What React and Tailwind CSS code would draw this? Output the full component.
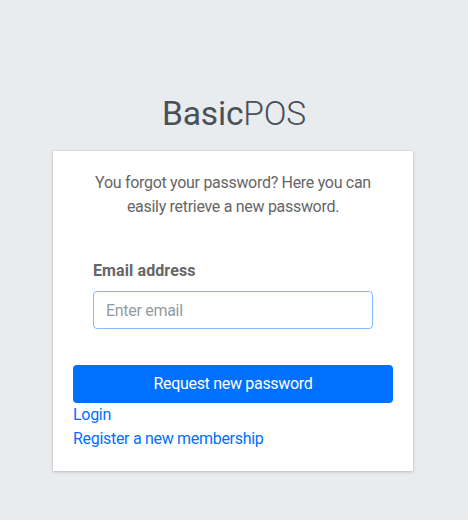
export default function App() {
  return (
    <div
      className="min-h-[520px] bg-[#e9ecef] flex flex-col items-center pt-[91px] tracking-[-0.3px]"
      style={{ fontFamily: 'Roboto, "Noto Sans", sans-serif' }}
    >
      <div className="text-[33.6px] leading-[46px] text-[#495057] font-light mb-[14px] tracking-[-0.2px]">
        <span className="font-normal">Basic</span>POS
      </div>

      <div className="w-[360px] mr-[2px] bg-white shadow-[0_0_1px_rgba(0,0,0,0.125),0_1px_3px_rgba(0,0,0,0.2)] p-5">
        <p className="text-center text-[#666] text-base leading-6 px-5 pb-5">
          You forgot your password? Here you can easily retrieve a new password.
        </p>

        <form onSubmit={(e) => e.preventDefault()}>
          <div className="px-5 pt-5 pb-4">
            <label className="block font-bold text-[#666] text-base leading-6 mb-2 tracking-[0.1px]">
              Email address
            </label>
            <input
              type="email"
              autoFocus
              placeholder="Enter email"
              className="w-full h-[38px] px-3 rounded border border-[#80bdff] text-base text-[#495057] placeholder:text-[#939ba2] outline-none"
            />
          </div>
          <div className="pt-5">
            <button
              type="submit"
              className="w-full h-[38px] rounded bg-[#0070ff] text-white text-base"
            >
              Request new password
            </button>
          </div>
        </form>

        <p className="text-[#0070ff] text-base leading-6">
          <a href="#">Login</a>
        </p>
        <p className="text-[#0070ff] text-base leading-6">
          <a href="#">Register a new membership</a>
        </p>
      </div>
    </div>
  );
}
